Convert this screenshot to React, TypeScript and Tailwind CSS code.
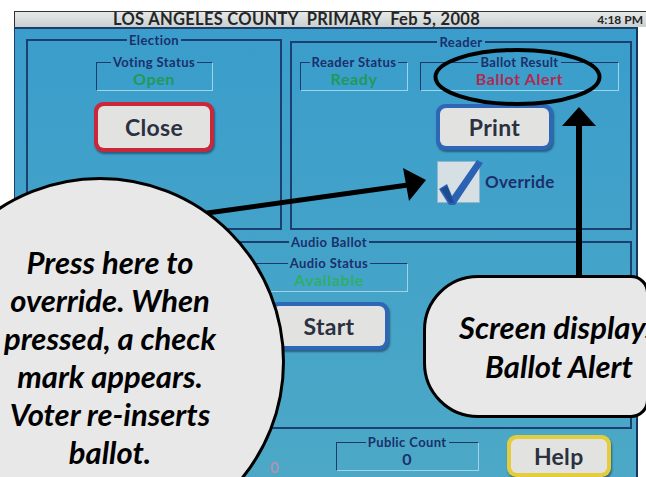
import React from "react";

const navy = "text-[#1b2f6b]";

function StatusBox({ label, value, color, className }: { label: string; value: string; color: string; className: string }) {
	return (
		<fieldset
			className={`h-[35px] border-t-[1.5px] border-l-[1.5px] border-b-[1.5px] border-r-[1.5px] border-t-[#1d3a6a] border-l-[#1d3a6a] border-b-[#9fd3ea] border-r-[#9fd3ea] text-center ${className}`}
		>
			<legend className={`mx-auto px-[2px] text-[13px] leading-[13px] font-bold tracking-[0.4px] ${navy}`}>{label}</legend>
			<div className={`mt-[2px] text-[16px] font-bold leading-[16px] tracking-[0.6px] ${color}`}>{value}</div>
		</fieldset>
	);
}

function Panel({ label, className, children }: { label: string; className: string; children?: React.ReactNode }) {
	return (
		<fieldset className={`border-2 border-[#1c3f70] ${className}`}>
			<legend className={`mx-auto px-[2px] text-[13px] leading-[12px] font-bold tracking-[0.4px] ${navy}`}>{label}</legend>
			{children}
		</fieldset>
	);
}

function ScreenButton({ label, ring, className }: { label: string; ring: string; className: string }) {
	return (
		<div className={`rounded-[9px] p-[4px] shadow-[1px_2px_2px_rgba(10,30,60,0.5)] ${ring} ${className}`}>
			<div className="flex h-full items-center justify-center rounded-[6px] bg-[#e2e3e1] text-[23px] font-bold tracking-[0.3px] text-[#2b3140]">
				{label}
			</div>
		</div>
	);
}

export default function App() {
	return (
		<div className="relative h-[477px] w-[646px] overflow-hidden bg-white font-['Lato',sans-serif]">
			<div className="ml-[14px] mt-[11px] w-[632px]">
				<div className="flex h-[16px] items-center border-l border-t border-[#333] bg-gradient-to-b from-[#e6e9e9] to-[#c9d0d1] text-[#262626]">
					<span className="ml-[98px] whitespace-pre text-[16.5px] font-bold leading-none tracking-[0.3px]">
						{"LOS ANGELES COUNTY  PRIMARY  Feb 5, 2008"}
					</span>
					<span className="ml-auto mr-[3px] text-[12px] font-bold leading-none">4:18 PM</span>
				</div>
				<div className="h-[450px] w-[624px] border-l border-t-2 border-[#1d3f6a] border-r-2 border-r-[#16365e] bg-gradient-to-b from-[#3a9dcb] to-[#4ca8c6] pl-[11px] pt-[5px]">
					<div className="flex items-start gap-[8px]">
						<Panel label="Election" className="flex h-[196px] w-[256px] flex-col items-center">
							<StatusBox label="Voting Status" value="Open" color="text-[#1f9a57]" className="mt-[10px] w-[117px]" />
							<ScreenButton label="Close" ring="bg-[#c9283a]" className="mt-[11px] h-[50px] w-[120px]" />
						</Panel>
						<Panel label="Reader" className="mt-[2px] h-[194px] w-[342px]">
							<div className="ml-[8px] mt-[8px] flex gap-[12px]">
								<StatusBox label="Reader Status" value="Ready" color="text-[#1f9a57]" className="w-[108px]" />
								<StatusBox label="Ballot Result" value="Ballot Alert" color="text-[#b3284e]" className="w-[199px]" />
							</div>
							<ScreenButton label="Print" ring="bg-[#2d67b6]" className="ml-[144px] mt-[13px] h-[46px] w-[117px]" />
							<div className="ml-[145px] mt-[11px] flex items-center gap-[5px]">
								<div className="relative h-[42px] w-[43px] border border-[#8fb8cc] bg-[#d6dfe3]">
									<svg viewBox="0 0 44 44" className="absolute left-0 top-0 h-[44px] w-[44px] overflow-visible">
										<path d="M1 27 L9 22 L14 34 L39 -2 L45 1 L17 43 L11 43 Z" fill="#2c62b4" />
										<path d="M3 27 L9 24 L14 36 L16 41 L12 41 Z" fill="#1d4a91" />
									</svg>
								</div>
								<span className={`text-[17px] font-bold tracking-[0.3px] ${navy}`}>Override</span>
							</div>
						</Panel>
					</div>
					<Panel label="Audio Ballot" className="mt-[6px] flex h-[193px] w-[606px] flex-col items-center">
						<StatusBox label="Audio Status" value="Available" color="text-[#2fae6a]" className="mt-[9px] w-[157px]" />
						<ScreenButton label="Start" ring="bg-[#2d67b6]" className="mt-[10px] h-[48px] w-[120px]" />
					</Panel>
					<div className="flex items-start">
						<span className="ml-[244px] mt-[27px] text-[15px] font-bold text-[#d98aa8] opacity-70">0</span>
						<StatusBox label="Public Count" value="0" color="text-[#1b2f6b]" className="ml-[57px] mt-[7px] w-[143px]" />
						<ScreenButton label="Help" ring="bg-[#e3cd3c]" className="ml-[28px] mt-[6px] h-[42px] w-[104px]" />
					</div>
				</div>
			</div>

			<svg className="absolute left-0 top-0" width="646" height="477" viewBox="0 0 646 477">
				<ellipse cx="517.5" cy="77" rx="82" ry="27" fill="none" stroke="#000" strokeWidth="4" />
				<line x1="579" y1="280" x2="579" y2="122" stroke="#000" strokeWidth="6" />
				<polygon points="579,107 562,126 596,126" fill="#000" />
				<line x1="200" y1="214" x2="408" y2="185" stroke="#000" strokeWidth="5" />
				<polygon points="426,180 403,168 409,201" fill="#000" />
			</svg>

			<div className="absolute left-[-85px] top-[177px] h-[370px] w-[370px] rounded-full border-[3px] border-black bg-[#e8e8e8]" />
			<div className="absolute left-[-5px] top-[243px] w-[230px] text-center text-[31px] font-bold italic leading-[38px] text-black">
				Press here to
				<br />
				{"override.  When"}
				<br />
				pressed, a check
				<br />
				mark appears.
				<br />
				Voter re-inserts
				<br />
				ballot.
			</div>

			<div className="absolute left-[423px] top-[275px] flex h-[143px] w-[226px] flex-col justify-center rounded-l-[55px] rounded-r-[18px] border-[3px] border-black bg-[#e8e8e8] text-[31px] font-bold italic leading-[39px] text-black">
				<span className="ml-[33px] whitespace-nowrap">Screen displays</span>
				<span className="ml-[59px] whitespace-nowrap">Ballot Alert</span>
			</div>
		</div>
	);
}
